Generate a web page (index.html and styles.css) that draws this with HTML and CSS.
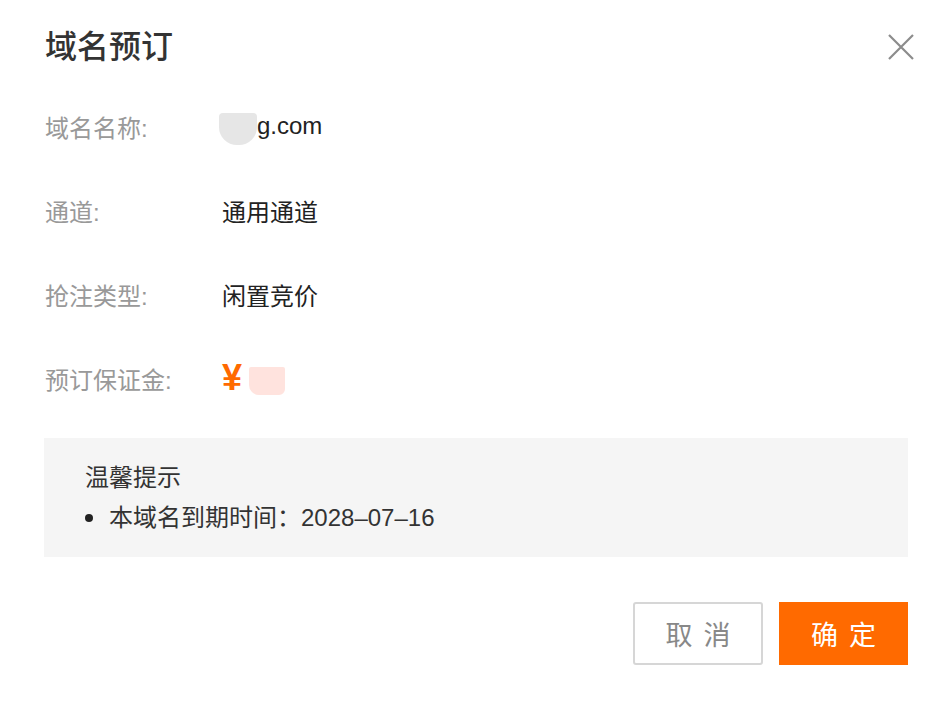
FILE: index.html
```html
<!DOCTYPE html>
<html lang="zh-CN">
<head>
    <meta charset="UTF-8">
    <meta name="viewport" content="width=device-width, initial-scale=1.0">
    <title>域名预订</title>
    <link rel="stylesheet" href="styles.css">
</head>
<body>
    <div class="dialog">
        <div class="dialog-header">
            <h2>域名预订</h2>
            <button class="close" aria-label="关闭">
                <svg width="26" height="26" viewBox="0 0 26 26">
                    <path d="M1 1 L25 25 M25 1 L1 25" stroke="#8c8c8c" stroke-width="2.2" fill="none"/>
                </svg>
            </button>
        </div>

        <div class="info-list">
            <div class="info-row">
                <span class="label">域名名称:</span>
                <span class="value"><span class="mask"></span>g.com</span>
            </div>
            <div class="info-row">
                <span class="label">通道:</span>
                <span class="value">通用通道</span>
            </div>
            <div class="info-row">
                <span class="label">抢注类型:</span>
                <span class="value">闲置竞价</span>
            </div>
            <div class="info-row">
                <span class="label">预订保证金:</span>
                <span class="value price">¥<span class="mask mask-pink"></span></span>
            </div>
        </div>

        <div class="tips">
            <div class="tips-title">温馨提示</div>
            <div class="tips-item"><span class="dot"></span>本域名到期时间：2028–07–16</div>
        </div>

        <div class="actions">
            <button class="btn btn-cancel">取 消</button>
            <button class="btn btn-primary">确 定</button>
        </div>
    </div>
</body>
</html>
```

FILE: styles.css
```css
body {
    margin: 0;
    padding: 0;
    background: #ffffff;
    font-family: "Liberation Sans", "Noto Sans CJK SC", sans-serif;
    color: #333333;
}
.dialog {
    padding: 27px 40px 0 44px;
}
.dialog-header {
    display: flex;
    justify-content: space-between;
    align-items: center;
    height: 40px;
}
.dialog-header h2 {
    margin: 0 0 0 1px;
    font-size: 32px;
    font-weight: 500;
    line-height: 40px;
    color: #333333;
}
.close {
    border: none;
    background: none;
    padding: 0;
    margin-right: -6px;
    display: flex;
    cursor: pointer;
}
.info-list {
    margin-top: 17px;
}
.info-row {
    display: flex;
    align-items: center;
    height: 84px;
    font-size: 24px;
}
.label {
    width: 177px;
    padding-left: 1px;
    color: #999999;
}
.value {
    display: flex;
    align-items: center;
    color: #222222;
}
.mask {
    display: inline-block;
    width: 38px;
    height: 32px;
    margin-left: -3px;
    margin-top: 6px;
    background: #e6e6e6;
    border-radius: 4px 4px 18px 18px;
}
.price {
    color: #ff6a00;
    font-size: 36px;
    font-weight: 700;
}
.mask-pink {
    width: 36px;
    height: 28px;
    margin-left: 7px;
    margin-top: 6px;
    background: #ffe3de;
    border-radius: 2px 2px 6px 10px;
}
.tips {
    margin-top: 18px;
    background: #f5f5f5;
    padding: 20px 41px 19px 41px;
    font-size: 24px;
    line-height: 40px;
    color: #333333;
}
.tips-item {
    display: flex;
    align-items: center;
}
.dot {
    width: 8px;
    height: 8px;
    border-radius: 50%;
    background: #222222;
    margin: 0 16px 0 0;
}
.actions {
    display: flex;
    justify-content: flex-end;
    gap: 16px;
    margin-top: 45px;
}
.btn {
    width: 130px;
    height: 63px;
    font-family: "Noto Sans CJK SC", sans-serif;
    font-size: 27px;
    word-spacing: 5px;
    border-radius: 3px;
    cursor: pointer;
}
.btn-cancel {
    background: #ffffff;
    color: #888888;
    border: 2px solid #d6d6d6;
}
.btn-primary {
    width: 129px;
    background: #ff6a00;
    color: #ffffff;
    border: none;
    border-radius: 0;
}
```
